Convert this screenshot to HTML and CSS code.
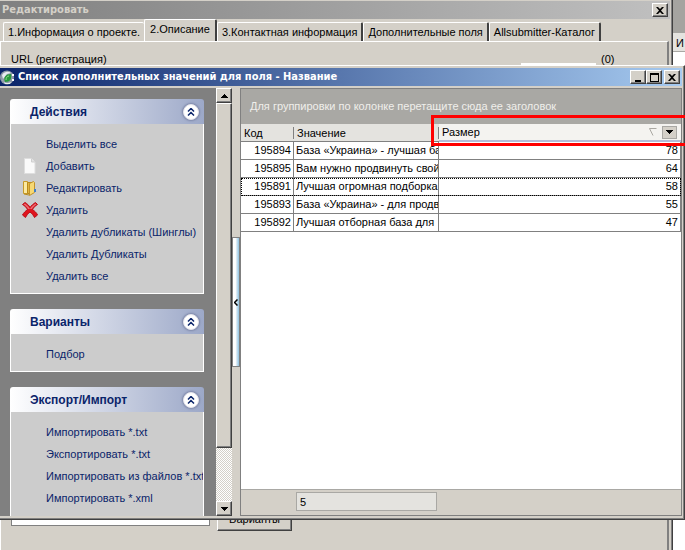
FILE: index.html
```html
<!DOCTYPE html>
<html lang="ru">
<head>
  <meta charset="UTF-8" />
  <meta name="viewport" content="width=device-width, initial-scale=1.0" />
  <title>Список дополнительных значений</title>
  <link rel="stylesheet" href="styles.css">
</head>
<body>

  <!-- Приложение на заднем плане -->
  <div class="app-strip">
    <div class="app-head">И</div>
  </div>

  <!-- Окно редактирования -->
  <section class="window editor">
    <header class="titlebar titlebar-inactive">
      <h2 class="title">Редактировать</h2>
      <button class="win-btn" aria-label="Закрыть">
        <svg width="8" height="7" viewBox="0 0 8 7"><path d="M0 0h2l2 2 2-2h2L5 3.500 8 7H6L4 5 2 7H0l3-3.500z"/></svg>
      </button>
    </header>
    <nav class="tabs">
      <button class="tab">1.Информация о проекте.</button>
      <button class="tab active">2.Описание</button>
      <button class="tab">3.Контактная информация</button>
      <button class="tab">Дополнительные поля</button>
      <button class="tab">Allsubmitter-Каталог</button>
    </nav>
    <div class="tab-page">
      <div class="url-row">
        <label for="url">URL (регистрация)</label>
        <input id="url" class="url-input" type="text">
        <span class="url-count">(0)</span>
      </div>
      <div class="bottom-row">
        <input class="bottom-input" type="text" aria-label="Название">
        <button class="push-btn">Варианты</button>
      </div>
    </div>
  </section>

  <!-- Окно со списком значений -->
  <section class="window list-window">
    <header class="titlebar">
      <svg class="app-icon" width="15" height="15" viewBox="0 0 15 15">
        <circle cx="7" cy="7.500" r="7" fill="#8d99a8"/>
        <path d="M2 5a6 6 0 0 1 9-2L7 4 3 9z" fill="#e8ecf0"/>
        <path d="M2 9c1 4 5 5 9 3l-1 2H5z" fill="#e8ecf0"/>
        <path d="M5 12C3 7 6 4 11 4c1 5-1 8-6 8z" fill="#279b3c"/>
        <path d="M6 10c0-2 1-4 3-4" fill="none" stroke="#8ee08a"/>
        <path d="M12 4h2v2h-2zM12 9h2v2h-2z" fill="#fff"/>
      </svg>
      <h1 class="title">Список дополнительных значений для поля - Название</h1>
      <div class="win-btns">
        <button class="win-btn" aria-label="Свернуть">
          <svg width="9" height="9" viewBox="0 0 9 9"><path d="M1 7h6v2H1z"/></svg>
        </button>
        <button class="win-btn" aria-label="Развернуть">
          <svg width="9" height="9" viewBox="0 0 9 9"><path d="M0 0h9v9H0zM1 2v6h7V2z" fill-rule="evenodd"/></svg>
        </button>
        <button class="win-btn win-close" aria-label="Закрыть">
          <svg width="8" height="7" viewBox="0 0 8 7"><path d="M0 0h2l2 2 2-2h2L5 3.500 8 7H6L4 5 2 7H0l3-3.500z"/></svg>
        </button>
      </div>
    </header>

    <div class="content">
      <aside class="sidebar">
        <div class="panel">
          <div class="panel-head">
            <h3>Действия</h3>
            <button class="round-btn" aria-label="Свернуть панель">
              <svg width="8" height="8" viewBox="0 0 8 8"><path d="M1 3.500l3-3 3 3M1 7.500l3-3 3 3"/></svg>
            </button>
          </div>
          <ul class="panel-list">
            <li><a href="#">Выделить все</a></li>
            <li>
              <svg class="item-icon" width="16" height="16" viewBox="0 0 16 16">
                <path d="M2.500 .5h7l3.500 3.500v11.500H2.500z" fill="#fafafa" stroke="#dedede"/>
                <path d="M9.500 .5v3.500H13" fill="#e4e4e4" stroke="#cfcfcf"/>
              </svg>
              <a href="#">Добавить</a>
            </li>
            <li>
              <svg class="item-icon" width="16" height="16" viewBox="0 0 16 16">
                <path d="M1.500 1.500h4v12h-4z" fill="#fbe9a0" stroke="#c79a28"/>
                <path d="M5.500 2.500h5v11h-5z" fill="#e2b53c" stroke="#b98a1c"/>
                <path d="M7.500 3.500l4-2 1 1v10l-5 3z" fill="#f6d873" stroke="#c0922a"/>
                <path d="M2 14l5 1" stroke="#b98a1c"/>
                <path d="M12 9h2v3h-2z" fill="#3f7fc8"/>
              </svg>
              <a href="#">Редактировать</a>
            </li>
            <li>
              <svg class="item-icon" width="16" height="16" viewBox="0 0 16 16">
                <path d="M3 .5c2 1 4 3 5 5 1.500-2 3-3.500 5.500-5l2 2c-2 1-4 3-5 5 2 1.500 4 3 5 5.500l-3 2.500c-1-2-2.500-4-4.500-5.500-2 1.500-3.500 3.500-4.500 5.500L.5 13c1-2 3-4 5-5.500-1-2-3-4-5-5z" fill="#e0141e" stroke="#b80f18"/>
                <path d="M3 1.500C5 3 7 5 8 7c1-2 3-4 5.500-5.500l1 1c-2 1-3.500 2.500-4.500 4.500H6c-1-2-2.500-3.500-4.500-4.500z" fill="#ee6a70"/>
              </svg>
              <a href="#">Удалить</a>
            </li>
            <li><a href="#">Удалить дубликаты (Шинглы)</a></li>
            <li><a href="#">Удалить Дубликаты</a></li>
            <li><a href="#">Удалить все</a></li>
          </ul>
        </div>

        <div class="panel">
          <div class="panel-head">
            <h3>Варианты</h3>
            <button class="round-btn" aria-label="Свернуть панель">
              <svg width="8" height="8" viewBox="0 0 8 8"><path d="M1 3.500l3-3 3 3M1 7.500l3-3 3 3"/></svg>
            </button>
          </div>
          <ul class="panel-list">
            <li><a href="#">Подбор</a></li>
          </ul>
        </div>

        <div class="panel">
          <div class="panel-head">
            <h3>Экспорт/Импорт</h3>
            <button class="round-btn" aria-label="Свернуть панель">
              <svg width="8" height="8" viewBox="0 0 8 8"><path d="M1 3.500l3-3 3 3M1 7.500l3-3 3 3"/></svg>
            </button>
          </div>
          <ul class="panel-list">
            <li><a href="#">Импортировать *.txt</a></li>
            <li><a href="#">Экспортировать *.txt</a></li>
            <li><a href="#">Импортировать из файлов *.txt</a></li>
            <li><a href="#">Импортировать *.xml</a></li>
            <li><a href="#">Экспортировать *.xml</a></li>
          </ul>
        </div>
      </aside>

      <div class="scrollbar">
        <button class="scroll-btn" aria-label="Вверх">
          <svg width="7" height="4" viewBox="0 0 7 4"><path d="M3 0h1v1h1v1h1v1h1v1H0V3h1V2h1V1h1z"/></svg>
        </button>
        <div class="scroll-thumb"></div>
        <button class="scroll-btn scroll-down" aria-label="Вниз">
          <svg width="7" height="4" viewBox="0 0 7 4"><path d="M0 0h7v1H6v1H5v1H4v1H3V3H2V2H1V1H0z"/></svg>
        </button>
      </div>

      <div class="splitter">
        <button class="splitter-handle" aria-label="Скрыть панель">
          <svg width="4" height="7" viewBox="0 0 4 7"><path d="M3.500 0.500l-3 3 3 3"/></svg>
        </button>
      </div>

      <main class="grid">
        <div class="group-bar">Для группировки по колонке перетащите сюда ее заголовок</div>
        <div class="grid-body">
          <table class="grid-table">
            <thead>
              <tr>
                <th class="col-code">Код</th>
                <th class="col-value">Значение</th>
                <th class="col-size">
                  <div class="size-head">
                    <span>Размер</span>
                    <svg class="sort-icon" width="8" height="8" viewBox="0 0 8 8"><path d="M7.500 .5H.5l3.500 7" fill="none" stroke="#aaa8a2"/></svg>
                    <button class="filter-btn" aria-label="Фильтр">
                      <svg width="7" height="4" viewBox="0 0 7 4"><path d="M0 0h7v1H6v1H5v1H4v1H3V3H2V2H1V1H0z"/></svg>
                    </button>
                  </div>
                </th>
              </tr>
            </thead>
            <tbody>
              <tr><td class="num">195894</td><td>База «Украина» - лучшая ба</td><td class="num">78</td></tr>
              <tr><td class="num">195895</td><td>Вам нужно продвинуть свой</td><td class="num">64</td></tr>
              <tr class="focused"><td class="num">195891</td><td>Лучшая огромная подборка</td><td class="num">58</td></tr>
              <tr><td class="num">195893</td><td>База «Украина» - для продв</td><td class="num">55</td></tr>
              <tr><td class="num">195892</td><td>Лучшая отборная база для</td><td class="num">47</td></tr>
            </tbody>
          </table>
          <div class="highlight"></div>
        </div>
        <footer class="grid-footer">
          <output class="count">5</output>
        </footer>
      </main>
    </div>
  </section>

</body>
</html>
```
FILE: styles.css
```css
* { margin: 0; padding: 0; box-sizing: border-box; }

html, body {
  height: 100%;
  overflow: hidden;
}

body {
  position: relative;
  background: #fff;
  color: #000;
  font-family: "Liberation Sans", Arial, sans-serif;
  font-size: 11px;
  line-height: 16px;
}

button, input {
  font: inherit;
  color: inherit;
  border-radius: 0;
}

svg { display: block; flex-shrink: 0; }

h3 { font-size: 12px; }

/* BACKGROUND APP */
.app-strip {
  height: 52px;
  padding-top: 33px;
  background: #a5a4a0;
}

.app-head {
  height: 19px;
  padding-top: 2px;
  padding-right: 1px;
  background: #e4e3df;
  border-bottom: 1px solid #a9a8a4;
  text-align: right;
}

/* WINDOWS */
.window {
  position: absolute;
  left: 0;
  display: flex;
  flex-direction: column;
  background: #d4d0c8;
}

.titlebar {
  display: flex;
  align-items: center;
  height: 18px;
  flex-shrink: 0;
  padding: 0 2px 0 0;
  background: linear-gradient(90deg, #0a246a, #a6caf0);
  color: #fff;
}

.titlebar-inactive {
  background: linear-gradient(90deg, #808080, #c0c0c0);
  color: #d4d0c8;
}

.title {
  flex: 1;
  min-width: 0;
  padding-left: 2px;
  font-family: "DejaVu Sans Condensed", "Noto Sans", sans-serif;
  font-size: 11px;
  white-space: nowrap;
  overflow: hidden;
}

.win-btns { display: flex; }

.win-btn {
  display: flex;
  align-items: center;
  justify-content: center;
  width: 16px;
  height: 14px;
  background: #d4d0c8;
  border: 1px solid;
  border-color: #fff #404040 #404040 #fff;
  box-shadow: inset -1px -1px #808080;
  color: #000;
}

.win-close { margin-left: 2px; }

/* EDITOR */
.editor {
  top: 0;
  right: 12px;
  bottom: 0;
  padding: 1px 2px 0 0;
  border-right: 1px solid #404040;
  box-shadow: inset -1px 0 #808080;
}

.tabs {
  display: flex;
  align-items: flex-end;
  height: 22px;
  flex-shrink: 0;
  padding: 0 3px;
}

.tab {
  height: 19px;
  padding: 0 4px;
  background: #d4d0c8;
  border: 1px solid #fff;
  border-right: 2px solid #404040;
  border-bottom: 0;
  border-radius: 2px 2px 0 0;
  white-space: nowrap;
}

.tab.active {
  height: 22px;
  padding: 0 5px 4px;
}

.tab:has(+ .active) { border-right: 0; }

.tab-page {
  flex: 1;
  display: flex;
  flex-direction: column;
  margin-right: 1px;
  padding: 9px 10px 0;
  border: 1px solid #fff;
  border-right: 2px solid #808080;
  border-bottom: 0;
}

.url-row {
  display: flex;
  height: 14px;
}

.url-input {
  width: 75px;
  margin: 0 5px 0 auto;
  background: none;
  border: 0;
  border-bottom: 2px solid #fff;
}

.url-count { width: 56px; }

.bottom-row {
  display: flex;
  align-items: flex-end;
  gap: 7px;
  padding-top: 440px;
}

.bottom-input {
  width: 199px;
  height: 21px;
  margin-bottom: 5px;
  background: #fff;
  border: 1px solid #808080;
}

.push-btn {
  width: 75px;
  height: 25px;
  background: #d4d0c8;
  border: 1px solid;
  border-color: #fff #404040 #404040 #fff;
  box-shadow: inset -1px -1px #808080;
}

/* LIST WINDOW */
.list-window {
  top: 65px;
  right: 0;
  height: 455px;
  padding: 2px 2px 3px 0;
  border: 1px solid #fff;
  border-width: 1px 1px 1px 0;
  border-right-color: #404040;
  border-bottom-color: #404040;
  box-shadow: inset -1px -1px #808080;
}

.app-icon { margin-right: 1px; }

.content {
  flex: 1;
  display: flex;
  min-height: 0;
  padding-top: 2px;
}

/* SIDEBAR */
.sidebar {
  display: flex;
  flex-direction: column;
  gap: 15px;
  width: 216px;
  flex-shrink: 0;
  padding: 11px 12px 0 10px;
  background: #808080;
  color: #0a246a;
  overflow: hidden;
}

.panel { flex-shrink: 0; }

.panel-head {
  display: flex;
  align-items: center;
  justify-content: space-between;
  height: 25px;
  padding: 0 5px 0 20px;
  border-radius: 3px 3px 0 0;
  background: linear-gradient(90deg, #fff, #9ca8c8);
}

.round-btn {
  display: flex;
  align-items: center;
  justify-content: center;
  width: 16px;
  height: 16px;
  background: #fff;
  border: 1px solid #e4e4ec;
  border-radius: 50%;
  box-shadow: 0 0 2px 1px #7c86a8;
}

.round-btn path {
  fill: none;
  stroke: #0a246a;
  stroke-width: 1.5;
}

.panel-list {
  padding: 9px 0 6px 11px;
  background: #ccc;
  border: 1px solid #fff;
  border-top: 0;
  list-style: none;
  overflow: hidden;
}

.panel-list li {
  display: flex;
  align-items: center;
  height: 22px;
  white-space: nowrap;
}

.panel-list a {
  color: inherit;
  text-decoration: none;
}

.panel-list a:only-child { padding-left: 24px; }

.item-icon { margin-right: 8px; }

/* SCROLLBAR */
.scrollbar {
  display: flex;
  flex-direction: column;
  width: 16px;
  flex-shrink: 0;
  background: repeating-conic-gradient(#fff 0 25%, #d4d0c8 0 50%) 0 0 / 2px 2px;
}

.scroll-btn, .scroll-thumb {
  flex-shrink: 0;
  background: #d4d0c8;
  border: 1px solid;
  border-color: #fff #404040 #404040 #fff;
  box-shadow: inset -1px -1px #808080;
}

.scroll-btn {
  display: flex;
  align-items: center;
  justify-content: center;
  height: 15px;
}

.scroll-thumb { height: 345px; }

.scroll-down { margin-top: auto; }

/* SPLITTER */
.splitter {
  display: flex;
  align-items: center;
  width: 8px;
  flex-shrink: 0;
}

.splitter-handle {
  display: flex;
  align-items: center;
  justify-content: center;
  width: 8px;
  height: 130px;
  background: linear-gradient(90deg, #fff 40%, #8cc0e0);
  border: 1px solid #808080;
}

.splitter-handle path {
  fill: none;
  stroke: #000;
  stroke-width: 1.5;
}

/* GRID */
.grid {
  flex: 1;
  display: flex;
  flex-direction: column;
  min-width: 0;
  background: #fff;
  border: 1px solid #808080;
}

.group-bar {
  height: 35px;
  flex-shrink: 0;
  padding: 9px 9px 0;
  background: #a9a8a4;
  color: #f0efeb;
  white-space: nowrap;
  overflow: hidden;
}

.grid-body {
  position: relative;
  flex: 1;
}

.grid-table {
  width: 100%;
  border-collapse: separate;
  border-spacing: 0;
  table-layout: fixed;
}

.grid-table th {
  height: 18px;
  padding: 0 4px 0 3px;
  background: linear-gradient(#808080, #808080) right center / 1px 12px no-repeat #e4e3df;
  border-bottom: 1px solid #808080;
  font-weight: normal;
  text-align: left;
}

.grid-table .col-code { width: 53px; }
.grid-table .col-value { width: 145px; }
.grid-table .col-size {
  background: #f4f3f0;
  border-bottom: 2px solid #b4bcd8;
}

.grid-table td {
  height: 18px;
  padding: 0 2px;
  border: 1px solid #808080;
  border-width: 0 1px 1px 0;
  line-height: 17px;
  white-space: nowrap;
  overflow: hidden;
}

.grid-table .num { text-align: right; }

.grid-table .focused {
  outline: 1px dotted #000;
  outline-offset: -1px;
}

.size-head {
  display: flex;
  align-items: center;
  height: 16px;
}

.sort-icon { margin-left: auto; }

.filter-btn {
  display: flex;
  align-items: center;
  justify-content: center;
  width: 15px;
  height: 13px;
  margin-left: 5px;
  background: #d4d0c8;
  border: 1px solid #a9a8a4;
}

.highlight {
  position: absolute;
  top: -9px;
  left: 190px;
  right: -12px;
  height: 31px;
  border: 3px solid #f00;
  pointer-events: none;
}

.grid-footer {
  height: 26px;
  flex-shrink: 0;
  padding: 2px 0 0 55px;
  background: #d4d0c8;
  border-top: 1px solid #a9a8a4;
}

.count {
  display: block;
  width: 141px;
  height: 19px;
  padding: 1px 3px;
  background: #e4e3df;
  border: 1px solid #a9a8a4;
}
```
